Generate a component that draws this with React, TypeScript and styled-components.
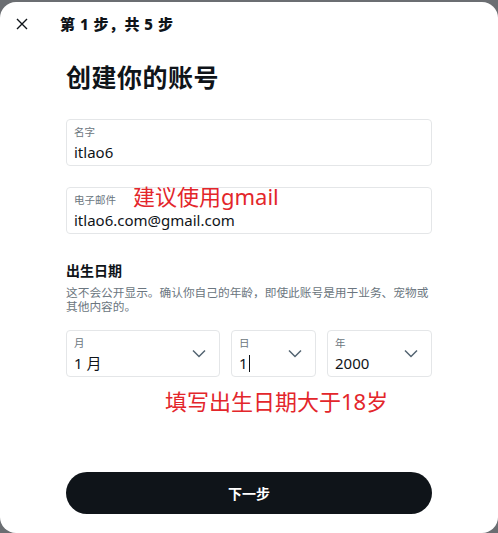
import styled, { createGlobalStyle } from "styled-components";

const GlobalStyle = createGlobalStyle`
  html, body {
    margin: 0;
    padding: 0;
    background: #6b6e72;
  }
  body {
    font-family: "Noto Sans", "Noto Sans CJK SC", sans-serif;
    color: #0f1419;
  }
`;

const Modal = styled.div`
  box-sizing: border-box;
  margin-top: 2px;
  width: 498px;
  height: 531px;
  background: #ffffff;
  border-radius: 16px;
  overflow: hidden;
`;

const Header = styled.div`
  display: flex;
  align-items: center;
  height: 44px;
  padding-left: 14px;
`;

const CloseButton = styled.button`
  display: flex;
  align-items: center;
  justify-content: center;
  width: 16px;
  height: 16px;
  padding: 0;
  border: none;
  background: transparent;
  color: #0f1419;
  cursor: pointer;
`;

const StepText = styled.div`
  margin-left: 30px;
  font-size: 15px;
  font-weight: 800;
  line-height: 20px;
  letter-spacing: 0.5px;
`;

const Body = styled.div`
  padding: 0 66px;
`;

const Title = styled.h1`
  margin: 15px 0 0;
  font-size: 25px;
  font-weight: 700;
  line-height: 32px;
  letter-spacing: 0.5px;
`;

const Field = styled.div<{ $top: number }>`
  position: relative;
  box-sizing: border-box;
  margin-top: ${(p) => p.$top}px;
  height: 47px;
  border: 1px solid #e4e6e8;
  border-radius: 4px;
  padding: 5px 7px 0;
`;

const Label = styled.div`
  font-size: 10.5px;
  line-height: 14px;
  color: #6b7680;
`;

const Value = styled.div`
  margin-top: 3px;
  font-size: 15px;
  line-height: 20px;
  color: #0f1419;
`;

const Note = styled.div<{ $size: number }>`
  color: #e3262b;
  font-size: ${(p) => p.$size}px;
  line-height: 1.25;
  font-family: "Noto Sans", "Noto Sans CJK SC", sans-serif;
`;

const FieldNote = styled(Note)`
  position: absolute;
  left: 66px;
  top: -5px;
`;

const SectionTitle = styled.div`
  margin-top: 27px;
  font-size: 14px;
  font-weight: 700;
  line-height: 20px;
`;

const Description = styled.p`
  margin: 4px 0 0;
  width: 368px;
  font-size: 11.7px;
  line-height: 14px;
  color: #6b7680;
`;

const SelectRow = styled.div`
  display: grid;
  grid-template-columns: 154px 85px 105px;
  gap: 11px;
  margin-top: 17px;
`;

const Select = styled.div`
  position: relative;
  box-sizing: border-box;
  height: 47px;
  border: 1px solid #e4e6e8;
  border-radius: 4px;
  padding: 5px 7px 0;
`;

const SelectValue = styled(Value)`
  display: flex;
  align-items: center;
`;

const Caret = styled.span`
  display: inline-block;
  width: 1px;
  height: 17px;
  margin-left: 1px;
  background: #0f1419;
`;

const Chevron = styled.svg`
  position: absolute;
  right: 13px;
  top: 18px;
  width: 14px;
  height: 9px;
`;

const BottomNote = styled(Note)`
  margin-top: 11px;
  padding-left: 99px;
`;

const NextButton = styled.button`
  display: block;
  width: 100%;
  height: 42px;
  margin-top: 56px;
  border: none;
  border-radius: 21px;
  background: #0f1419;
  color: #ffffff;
  font-family: "Noto Sans CJK SC", "Noto Sans", sans-serif;
  font-size: 14px;
  font-weight: 700;
  cursor: pointer;
`;

function ChevronDown() {
  return (
    <Chevron viewBox="0 0 14 9">
      <polyline points="1,1.5 7,7.5 13,1.5" fill="none" stroke="#536471" strokeWidth="1.5" />
    </Chevron>
  );
}

export default function App() {
  return (
    <>
      <GlobalStyle />
      <Modal>
        <Header>
          <CloseButton aria-label="关闭">
            <svg width="12" height="12" viewBox="0 0 12 12">
              <path d="M1 1 L11 11 M11 1 L1 11" stroke="#0f1419" strokeWidth="1.4" />
            </svg>
          </CloseButton>
          <StepText>第 1 步，共 5 步</StepText>
        </Header>
        <Body>
          <Title>创建你的账号</Title>
          <Field $top={26}>
            <Label>名字</Label>
            <Value>itlao6</Value>
          </Field>
          <Field $top={21}>
            <Label>电子邮件</Label>
            <Value>itlao6.com@gmail.com</Value>
            <FieldNote $size={22}>建议使用gmail</FieldNote>
          </Field>
          <SectionTitle>出生日期</SectionTitle>
          <Description>
            这不会公开显示。确认你自己的年龄，即使此账号是用于业务、宠物或其他内容的。
          </Description>
          <SelectRow>
            <Select>
              <Label>月</Label>
              <SelectValue>1 月</SelectValue>
              <ChevronDown />
            </Select>
            <Select>
              <Label>日</Label>
              <SelectValue>
                1<Caret />
              </SelectValue>
              <ChevronDown />
            </Select>
            <Select>
              <Label>年</Label>
              <SelectValue>2000</SelectValue>
              <ChevronDown />
            </Select>
          </SelectRow>
          <BottomNote $size={22}>填写出生日期大于18岁</BottomNote>
          <NextButton>下一步</NextButton>
        </Body>
      </Modal>
    </>
  );
}
